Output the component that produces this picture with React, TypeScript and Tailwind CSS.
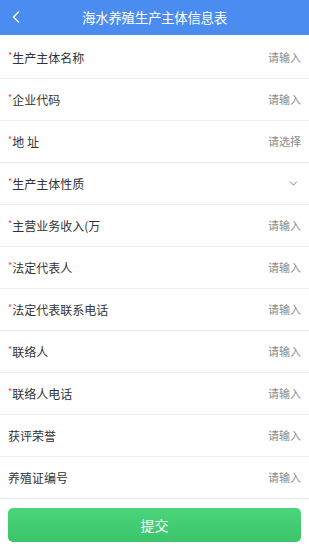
import React from 'react';
import { ChevronLeft, ChevronDown } from 'lucide-react';

const fields = [
  { label: '生产主体名称', required: true, hint: '请输入' },
  { label: '企业代码', required: true, hint: '请输入' },
  { label: '地 址', required: true, hint: '请选择' },
  { label: '生产主体性质', required: true, hint: '' },
  { label: '主营业务收入(万', required: true, hint: '请输入' },
  { label: '法定代表人', required: true, hint: '请输入' },
  { label: '法定代表联系电话', required: true, hint: '请输入' },
  { label: '联络人', required: true, hint: '请输入' },
  { label: '联络人电话', required: true, hint: '请输入' },
  { label: '获评荣誉', required: false, hint: '请输入' },
  { label: '养殖证编号', required: false, hint: '请输入' },
];

const App = () => {
  return (
    <div
      className="w-[309px] h-[550px] bg-white flex flex-col"
      style={{ fontFamily: '"Noto Sans CJK SC", "Noto Sans", sans-serif' }}
    >
      {/* Header */}
      <div className="h-[35px] bg-[#4a8cf0] flex items-center relative shrink-0">
        <ChevronLeft size={20} strokeWidth={1.6} className="text-white absolute left-[6px] top-[7px]" />
        <div className="flex-1 text-center text-white text-[13.5px] tracking-tight">海水养殖生产主体信息表</div>
      </div>

      {/* Form */}
      <div className="flex flex-col pt-[2px]">
        {fields.map((f) => (
          <div
            key={f.label}
            className="h-[42px] flex items-center justify-between px-[8px] border-b border-[#ececec]"
          >
            <div className="flex items-start text-[12px] text-[#333]">
              {f.required && <span className="text-[#e64545] text-[9px] leading-[12px] mt-[1px]">*</span>}
              <span>{f.label}</span>
            </div>
            {f.hint ? (
              <span className="text-[11px] text-[#8a8a8a]">{f.hint}</span>
            ) : (
              <ChevronDown size={13} strokeWidth={1.5} className="text-[#666] mr-[1px]" />
            )}
          </div>
        ))}
      </div>

      {/* Submit */}
      <div className="px-[8px] pt-[9px]">
        <button className="w-full h-[34px] rounded-[5px] bg-gradient-to-b from-[#4ad67c] to-[#3cc46b] text-white text-[14px]">
          提交
        </button>
      </div>
    </div>
  );
};

export default App;
